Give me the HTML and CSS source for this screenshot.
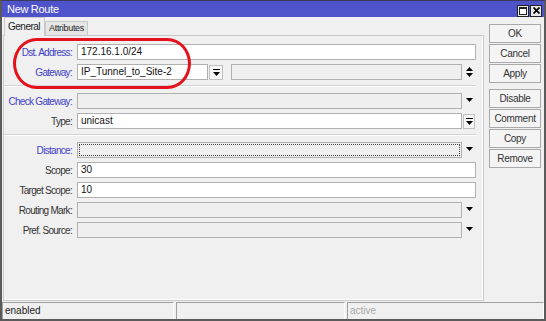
FILE: index.html
```html
<!DOCTYPE html>
<html lang="en">
<head>
    <meta charset="UTF-8">
    <title>New Route</title>
    <link rel="stylesheet" href="styles.css">
</head>
<body>
    <div class="window">
        <div class="titlebar">
            <span class="title">New Route</span>
            <span class="tb-btn"><span class="max-icon"></span></span>
            <span class="tb-btn">
                <svg width="7" height="7" viewBox="0 0 7 7"><path d="M0.5 0.5 L6.5 6.5 M6.5 0.5 L0.5 6.5" stroke="#000" stroke-width="1.8"/></svg>
            </span>
        </div>

        <div class="main">
            <div class="content">
                <div class="tabs">
                    <div class="tab active">General</div>
                    <div class="tab">Attributes</div>
                </div>

                <div class="panel">
                    <div class="row">
                        <label class="lbl blue">Dst. Address:</label>
                        <div class="field">172.16.1.0/24</div>
                    </div>
                    <div class="row">
                        <label class="lbl blue">Gateway:</label>
                        <div class="field gw">IP_Tunnel_to_Site-2</div>
                        <span class="expand gw-btn">
                            <svg width="7" height="7" viewBox="0 0 7 7"><rect x="0" y="0" width="7" height="1" fill="#000"/><polygon points="0,3 7,3 3.5,7" fill="#000"/></svg>
                        </span>
                        <div class="field off gw2"></div>
                        <span class="cell">
                            <svg width="7" height="10" viewBox="0 0 7 10"><polygon points="3.5,0 7,4 0,4" fill="#000"/><polygon points="0,6 7,6 3.5,10" fill="#000"/></svg>
                        </span>
                    </div>

                    <div class="sep"></div>

                    <div class="row">
                        <label class="lbl blue">Check Gateway:</label>
                        <div class="field off"></div>
                        <span class="cell arrow"><svg width="7" height="4" viewBox="0 0 7 4"><polygon points="0,0 7,0 3.5,4" fill="#000"/></svg></span>
                    </div>
                    <div class="row">
                        <label class="lbl">Type:</label>
                        <div class="field">unicast</div>
                        <span class="cell">
                            <span class="expand">
                                <svg width="7" height="7" viewBox="0 0 7 7"><rect x="0" y="0" width="7" height="1" fill="#000"/><polygon points="0,3 7,3 3.5,7" fill="#000"/></svg>
                            </span>
                        </span>
                    </div>

                    <div class="sep"></div>

                    <div class="row">
                        <label class="lbl blue">Distance:</label>
                        <div class="field off focus"></div>
                        <span class="cell arrow"><svg width="7" height="4" viewBox="0 0 7 4"><polygon points="0,0 7,0 3.5,4" fill="#000"/></svg></span>
                    </div>
                    <div class="row">
                        <label class="lbl">Scope:</label>
                        <div class="field">30</div>
                    </div>
                    <div class="row">
                        <label class="lbl">Target Scope:</label>
                        <div class="field">10</div>
                    </div>
                    <div class="row">
                        <label class="lbl">Routing Mark:</label>
                        <div class="field off"></div>
                        <span class="cell arrow"><svg width="7" height="4" viewBox="0 0 7 4"><polygon points="0,0 7,0 3.5,4" fill="#000"/></svg></span>
                    </div>
                    <div class="row">
                        <label class="lbl">Pref. Source:</label>
                        <div class="field off"></div>
                        <span class="cell arrow"><svg width="7" height="4" viewBox="0 0 7 4"><polygon points="0,0 7,0 3.5,4" fill="#000"/></svg></span>
                    </div>
                </div>
            </div>

            <div class="buttons">
                <button>OK</button>
                <button>Cancel</button>
                <button>Apply</button>
                <button class="spaced">Disable</button>
                <button>Comment</button>
                <button>Copy</button>
                <button>Remove</button>
            </div>
        </div>

        <div class="status">
            <div class="status-cell">enabled</div>
            <div class="status-cell"></div>
            <div class="status-cell muted">active</div>
        </div>

        <!-- red marker drawn over the first two fields -->
        <div class="annot"></div>
    </div>
</body>
</html>
```

FILE: styles.css
```css
* {
    box-sizing: border-box;
}
body {
    margin: 0;
    font-family: "Liberation Sans", Arial, sans-serif;
    font-size: 10px;
    color: #222;
    background: #f0f0f0;
}
.window {
    position: relative;
    width: 546px;
    height: 321px;
    border: 2px solid #5a5a5a;
    border-top: 1px solid #3a3a5a;
    background: #f0f0f0;
    display: flex;
    flex-direction: column;
}
.titlebar {
    height: 16px;
    background: #4e53c9;
    color: white;
    display: flex;
    align-items: center;
    padding: 0 2px 0 5px;
    gap: 1px;
}
.title {
    flex: 1;
    font-size: 11px;
    letter-spacing: -0.3px;
}
.tb-btn {
    width: 12px;
    height: 12px;
    margin-top: 3px;
    background: #e8e8e8;
    border: 1px solid #222;
    display: flex;
    align-items: center;
    justify-content: center;
}
.max-icon {
    width: 8px;
    height: 8px;
    background: white;
    border: 1px solid #222;
    border-top-width: 2px;
}
.main {
    flex: 1;
    display: flex;
}
.content {
    width: 482px;
    display: flex;
    flex-direction: column;
    padding-left: 1px;
}
.tabs {
    height: 18px;
    display: flex;
    align-items: flex-end;
    padding-left: 1px;
    position: relative;
    z-index: 1;
}
.tab {
    height: 14px;
    padding: 0 3px;
    line-height: 12px;
    font-size: 9px;
    letter-spacing: -0.3px;
    background: #e6e6e6;
    border: 1px solid #c9c9c9;
    border-bottom: none;
}
.tab.active {
    height: 19px;
    width: 41px;
    margin-bottom: -1px;
    background: #f0f0f0;
    line-height: 17px;
    font-size: 10px;
    letter-spacing: -0.5px;
}
.panel {
    flex: 1;
    border: 1px solid #c9c9c9;
    box-shadow: inset -1px -1px 0 #fff;
    padding: 8px 7px 0 0;
    display: flex;
    flex-direction: column;
    gap: 4px;
}
.row {
    display: flex;
    height: 16px;
    align-items: center;
}
.lbl {
    width: 68px;
    margin-right: 5px;
    text-align: right;
    color: #333;
    letter-spacing: -0.7px;
    white-space: nowrap;
}
.lbl.blue {
    color: #4040c8;
}
.field {
    flex: 1;
    height: 16px;
    line-height: 14px;
    padding-left: 3px;
    background: white;
    border: 1px solid #b0b0b0;
    color: #111;
}
.field.off {
    background: #efefef;
}
.field.focus {
    outline: 1px dotted #444;
    outline-offset: -3px;
}
.field.gw {
    flex: none;
    width: 131px;
}
.field.gw2 {
    margin-left: 8px;
}
.cell {
    width: 14px;
    height: 16px;
    display: flex;
    align-items: center;
    justify-content: center;
}
.cell.arrow {
    padding-bottom: 3px;
}
.expand {
    width: 12px;
    height: 15px;
    background: #f6f6f6;
    border: 1px solid #c0c0c0;
    display: flex;
    align-items: center;
    justify-content: center;
}
.expand.gw-btn {
    width: 14px;
    margin-left: 1px;
}
.sep {
    height: 2px;
    border-top: 1px solid #d4d4d4;
    border-bottom: 1px solid #fff;
    margin: 1px 0 2px;
}
.buttons {
    flex: 1;
    display: flex;
    flex-direction: column;
    gap: 1px;
    padding: 7px 0 0 5px;
}
button {
    width: 52px;
    height: 19px;
    padding: 0;
    font-family: inherit;
    font-size: 10px;
    letter-spacing: -0.3px;
    color: #333;
    background: #f4f4f4;
    border: 1px solid #a9a9a9;
}
button.spaced {
    margin-top: 5px;
}
.status {
    height: 17px;
    margin-top: 1px;
    display: grid;
    grid-template-columns: 172px 169px 1fr;
    gap: 2px;
}
.status-cell {
    border-top: 1px solid #a0a0a0;
    border-left: 1px solid #a0a0a0;
    border-right: 1px solid #fff;
    padding-left: 2px;
    line-height: 15px;
}
.status-cell.muted {
    color: #aaa;
}
.annot {
    position: absolute;
    left: 11px;
    top: 37px;
    width: 178px;
    height: 51px;
    border: 3px solid #e3121c;
    border-radius: 24px / 26px;
}
```
